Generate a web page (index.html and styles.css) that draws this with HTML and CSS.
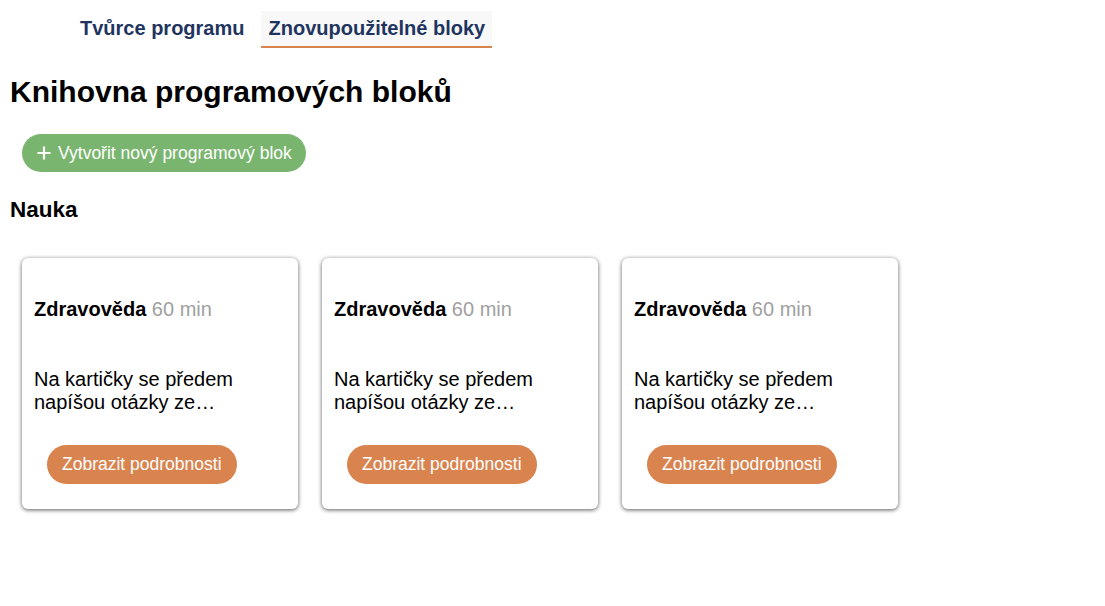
FILE: index.html
```html
<!DOCTYPE html>
<html lang="cs">
<head>
<meta charset="utf-8">
<title>Knihovna programových bloků</title>
<link rel="stylesheet" href="styles.css">
</head>
<body>
<nav class="tabs">
  <a class="tab">Tvůrce programu</a>
  <a class="tab tab-active">Znovupoužitelné bloky</a>
</nav>
<main class="page">
  <h1 class="title">Knihovna programových bloků</h1>
  <div class="actions">
    <button class="btn btn-green"><svg class="plus" viewBox="0 0 14 14" width="14" height="14"><path d="M7 0.5v13M0.5 7h13" stroke="#fff" stroke-width="2.2" fill="none"/></svg>Vytvořit nový programový blok</button>
  </div>
  <h2 class="section">Nauka</h2>
  <div class="cards">
    <div class="card">
      <div class="card-title"><b>Zdravověda</b> <span class="dur">60 min</span></div>
      <p class="card-desc">Na kartičky se předem napíšou otázky ze…</p>
      <div class="card-foot"><button class="btn btn-orange">Zobrazit podrobnosti</button></div>
    </div>
    <div class="card">
      <div class="card-title"><b>Zdravověda</b> <span class="dur">60 min</span></div>
      <p class="card-desc">Na kartičky se předem napíšou otázky ze…</p>
      <div class="card-foot"><button class="btn btn-orange">Zobrazit podrobnosti</button></div>
    </div>
    <div class="card">
      <div class="card-title"><b>Zdravověda</b> <span class="dur">60 min</span></div>
      <p class="card-desc">Na kartičky se předem napíšou otázky ze…</p>
      <div class="card-foot"><button class="btn btn-orange">Zobrazit podrobnosti</button></div>
    </div>
  </div>
</main>
</body>
</html>
```
FILE: styles.css
```css
html, body {
  margin: 0;
  padding: 0;
  background: #fff;
  color: #000;
  font-family: "Liberation Sans", Arial, sans-serif;
}
body {
  min-height: 100vh;
}
.tabs {
  display: flex;
  gap: 10px;
  padding: 11px 0 0 73px;
}
.tab {
  display: block;
  padding: 6px 7px;
  font-size: 20px;
  line-height: 23px;
  font-weight: bold;
  color: #1f3560;
  border-bottom: 2px solid transparent;
}
.tab-active {
  background: #f8f8f8;
  border-bottom-color: #d9834f;
}
.page {
  padding: 0 10px 40px;
}
.title {
  margin: 27px 0 0;
  font-size: 30px;
  line-height: 34px;
  font-weight: bold;
}
.actions {
  padding: 25px 0 0 12px;
}
.btn {
  display: inline-flex;
  align-items: center;
  border: none;
  color: #fff;
  font-family: "Liberation Sans", Arial, sans-serif;
  font-size: 17.5px;
  cursor: pointer;
}
.btn-green {
  height: 38px;
  padding: 0 14px 0 15px;
  border-radius: 19px;
  background: #7ab56f;
}
.plus {
  margin-right: 7px;
}
.section {
  margin: 25px 0 0;
  font-size: 22.5px;
  line-height: 26px;
  font-weight: bold;
}
.cards {
  display: flex;
  gap: 24px;
  padding: 35px 0 0 12px;
}
.card {
  width: 276px;
  height: 251px;
  box-sizing: border-box;
  padding: 0 12px;
  border-radius: 6px;
  background: #fff;
  box-shadow: 0 1px 4px rgba(0, 0, 0, 0.65);
}
.card-title {
  margin-top: 40px;
  font-size: 20px;
  line-height: 23px;
}
.dur {
  color: #a0a0a0;
}
.card-desc {
  margin: 47px 0 0;
  font-size: 20px;
  line-height: 23px;
}
.card-foot {
  padding: 31px 0 0 13px;
}
.btn-orange {
  height: 39px;
  padding: 0 15px;
  border-radius: 20px;
  background: #d9834f;
}
```
